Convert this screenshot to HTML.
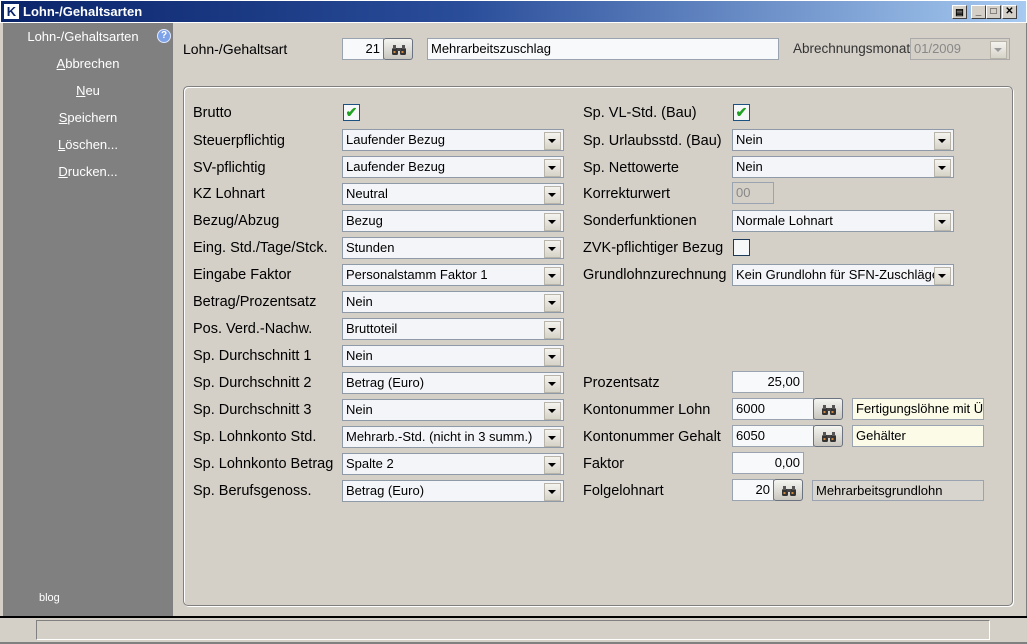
<!DOCTYPE html>
<html><head><meta charset="utf-8"><style>
*{box-sizing:border-box;margin:0;padding:0}
body{width:1027px;height:644px;overflow:hidden;background:#d4d0c8;font-family:"Liberation Sans",Arial,sans-serif;font-size:13px;color:#000;position:relative}
.a{position:absolute}
.title{left:0;top:0;width:1027px;height:23px;background:linear-gradient(90deg,#0a246a 0%,#2a4d9a 45%,#a6caf0 100%);border:1px solid #fff;}
.title span{position:absolute;left:22px;top:3px;color:#fff;font-weight:bold;font-size:13px}
.logo{left:4px;top:4px;width:15px;height:15px;background:#fff;color:#0a246a;font-weight:bold;font-size:13px;line-height:15px;text-align:center}
.wb{top:5px;width:15px;height:14px;background:#d4d0c8;border:1px solid;border-color:#fff #404040 #404040 #fff;font-size:10px;line-height:12px;text-align:center;font-weight:bold}
.side{left:3px;top:23px;width:170px;height:593px;background:#808080}
.side div{position:absolute;width:170px;text-align:center;color:#fff;font-size:13px}
.lbl{line-height:22px;white-space:nowrap;font-size:14.5px;margin-top:1px}
.sel{height:22px;background:#f4f5f9;border:1px solid #8f9aa8;line-height:20px;padding-left:3px;white-space:nowrap;overflow:hidden}
.sel:after{content:"";position:absolute;right:2px;top:2px;width:15px;height:16px;background:linear-gradient(#f4f3ee,#d6d3c8);border:1px solid #b8b4aa}
.sel b{position:absolute;right:7px;top:9px;width:0;height:0;border-left:4px solid transparent;border-right:4px solid transparent;border-top:4px solid #000;z-index:2}
.inp{height:22px;background:#f8f9fb;border:1px solid #9aa4b0;line-height:20px;padding:0 3px;white-space:nowrap;overflow:hidden}
.r{text-align:right}
.bin{width:30px;height:22px;border:1px solid #6b7280;border-radius:3px;background:linear-gradient(#f4f4f0,#c8c6be)}
.bin svg{position:absolute;left:7px;top:5px}
.chk{width:17px;height:17px;border:1px solid #1c5180;background:#f6f7f9;color:#21a121;font-size:14px;line-height:15px;text-align:center;font-weight:bold}
</style></head><body>
<svg width="0" height="0" style="position:absolute"><defs><g id="bn"><rect x="1" y="4" width="6" height="7" rx="1.5" fill="#333"/><rect x="9" y="4" width="6" height="7" rx="1.5" fill="#333"/><rect x="2" y="1" width="3" height="4" fill="#555"/><rect x="11" y="1" width="3" height="4" fill="#555"/><rect x="6" y="4" width="4" height="3" fill="#444"/><rect x="2.5" y="7" width="2" height="2" fill="#c84"/><rect x="10.5" y="7" width="2" height="2" fill="#c84"/></g></defs></svg>
<div class="a title"><span>Lohn-/Gehaltsarten</span></div>
<div class="a logo">K</div>
<div class="a wb" style="left:952px;font-size:9px">▤</div>
<div class="a wb" style="left:971px">_</div>
<div class="a wb" style="left:986px">□</div>
<div class="a wb" style="left:1002px">✕</div>
<div class="a side">
<div style="top:6px;width:160px">Lohn-/Gehaltsarten</div>
<div style="left:154px;top:6px;width:14px;height:14px;border-radius:7px;background:#7da2e8;border:1px solid #dfe8ff;font-size:10px;line-height:12px;font-weight:bold">?</div>
<div style="top:33px"><u>A</u>bbrechen</div>
<div style="top:60px"><u>N</u>eu</div>
<div style="top:87px"><u>S</u>peichern</div>
<div style="top:114px"><u>L</u>öschen...</div>
<div style="top:141px"><u>D</u>rucken...</div>
<div style="top:569px;left:36px;width:30px;text-align:left;font-size:11px">blog</div>
</div>
<div class="a" style="left:1021px;top:23px;width:6px;height:594px;background:#d4d0c8;border-right:1px solid #808080"></div>

<div class="a lbl" style="left:183px;top:37px;font-size:14px">Lohn-/Gehaltsart</div>
<div class="a inp r" style="left:342px;top:38px;width:42px">21</div>
<div class="a bin" style="left:383px;top:38px"><svg width="16" height="12"><use href="#bn"/></svg></div>
<div class="a inp" style="left:427px;top:38px;width:352px">Mehrarbeitszuschlag</div>
<div class="a lbl" style="left:793px;top:37px;color:#333;font-size:13.5px">Abrechnungsmonat</div>
<div class="a sel" style="left:910px;top:38px;width:100px;background:#d4d0c8;color:#888;border-color:#aaa">01/2009<b style="border-top-color:#999"></b></div>

<div class="a" style="left:183px;top:86px;width:830px;height:520px;border:1px solid #808080;border-radius:5px;box-shadow:inset 1px 1px 0 #fff,1px 1px 0 #fff"></div>

<div class="a lbl" style="left:193px;top:101px">Brutto</div>
<div class="a chk" style="left:343px;top:104px">✔</div>
<div class="a lbl" style="left:583px;top:101px">Sp. VL-Std. (Bau)</div>
<div class="a chk" style="left:733px;top:104px">✔</div>

<div class="a lbl" style="left:193px;top:129px">Steuerpflichtig</div><div class="a sel" style="left:342px;top:129px;width:222px">Laufender Bezug<b></b></div>
<div class="a lbl" style="left:193px;top:156px">SV-pflichtig</div><div class="a sel" style="left:342px;top:156px;width:222px">Laufender Bezug<b></b></div>
<div class="a lbl" style="left:193px;top:182px">KZ Lohnart</div><div class="a sel" style="left:342px;top:183px;width:222px">Neutral<b></b></div>
<div class="a lbl" style="left:193px;top:209px">Bezug/Abzug</div><div class="a sel" style="left:342px;top:210px;width:222px">Bezug<b></b></div>
<div class="a lbl" style="left:193px;top:236px">Eing. Std./Tage/Stck.</div><div class="a sel" style="left:342px;top:237px;width:222px">Stunden<b></b></div>
<div class="a lbl" style="left:193px;top:263px">Eingabe Faktor</div><div class="a sel" style="left:342px;top:264px;width:222px">Personalstamm Faktor 1<b></b></div>
<div class="a lbl" style="left:193px;top:290px">Betrag/Prozentsatz</div><div class="a sel" style="left:342px;top:291px;width:222px">Nein<b></b></div>
<div class="a lbl" style="left:193px;top:317px">Pos. Verd.-Nachw.</div><div class="a sel" style="left:342px;top:318px;width:222px">Bruttoteil<b></b></div>
<div class="a lbl" style="left:193px;top:344px">Sp. Durchschnitt 1</div><div class="a sel" style="left:342px;top:345px;width:222px">Nein<b></b></div>
<div class="a lbl" style="left:193px;top:371px">Sp. Durchschnitt 2</div><div class="a sel" style="left:342px;top:372px;width:222px">Betrag (Euro)<b></b></div>
<div class="a lbl" style="left:193px;top:398px">Sp. Durchschnitt 3</div><div class="a sel" style="left:342px;top:399px;width:222px">Nein<b></b></div>
<div class="a lbl" style="left:193px;top:425px">Sp. Lohnkonto Std.</div><div class="a sel" style="left:342px;top:426px;width:222px">Mehrarb.-Std. (nicht in 3 summ.)<b></b></div>
<div class="a lbl" style="left:193px;top:452px">Sp. Lohnkonto Betrag</div><div class="a sel" style="left:342px;top:453px;width:222px">Spalte 2<b></b></div>
<div class="a lbl" style="left:193px;top:479px">Sp. Berufsgenoss.</div><div class="a sel" style="left:342px;top:480px;width:222px">Betrag (Euro)<b></b></div>

<div class="a lbl" style="left:583px;top:129px">Sp. Urlaubsstd. (Bau)</div><div class="a sel" style="left:732px;top:129px;width:222px">Nein<b></b></div>
<div class="a lbl" style="left:583px;top:156px">Sp. Nettowerte</div><div class="a sel" style="left:732px;top:156px;width:222px">Nein<b></b></div>
<div class="a lbl" style="left:583px;top:182px">Korrekturwert</div><div class="a inp" style="left:732px;top:182px;width:42px;background:#d4d0c8;color:#888">00</div>
<div class="a lbl" style="left:583px;top:209px">Sonderfunktionen</div><div class="a sel" style="left:732px;top:210px;width:222px">Normale Lohnart<b></b></div>
<div class="a lbl" style="left:583px;top:236px">ZVK-pflichtiger Bezug</div><div class="a chk" style="left:733px;top:239px;border-color:#1c3a5a"></div>
<div class="a lbl" style="left:583px;top:263px">Grundlohnzurechnung</div><div class="a sel" style="left:732px;top:264px;width:222px">Kein Grundlohn für SFN-Zuschläge<b></b></div>

<div class="a lbl" style="left:583px;top:371px">Prozentsatz</div><div class="a inp r" style="left:732px;top:371px;width:72px">25,00</div>
<div class="a lbl" style="left:583px;top:398px">Kontonummer Lohn</div><div class="a inp" style="left:732px;top:398px;width:82px">6000</div><div class="a bin" style="left:813px;top:398px"><svg width="16" height="12"><use href="#bn"/></svg></div><div class="a inp" style="left:852px;top:398px;width:132px;background:#fbfbe8">Fertigungslöhne mit Ü</div>
<div class="a lbl" style="left:583px;top:425px">Kontonummer Gehalt</div><div class="a inp" style="left:732px;top:425px;width:82px">6050</div><div class="a bin" style="left:813px;top:425px"><svg width="16" height="12"><use href="#bn"/></svg></div><div class="a inp" style="left:852px;top:425px;width:132px;background:#fbfbe8">Gehälter</div>
<div class="a lbl" style="left:583px;top:452px">Faktor</div><div class="a inp r" style="left:732px;top:452px;width:72px">0,00</div>
<div class="a lbl" style="left:583px;top:479px">Folgelohnart</div><div class="a inp r" style="left:732px;top:479px;width:42px">20</div><div class="a bin" style="left:773px;top:479px"><svg width="16" height="12"><use href="#bn"/></svg></div><div class="a inp" style="left:812px;top:480px;width:172px;height:21px;background:#d8d5ce">Mehrarbeitsgrundlohn</div>

<div class="a" style="left:0;top:616px;width:1027px;height:2px;background:#000"></div>
<div class="a" style="left:36px;top:620px;width:954px;height:20px;border:1px solid #808080;border-right-color:#fff;border-bottom-color:#fff"></div>
<div class="a" style="left:0;top:642px;width:1027px;height:2px;background:#808080"></div>
</body></html>
